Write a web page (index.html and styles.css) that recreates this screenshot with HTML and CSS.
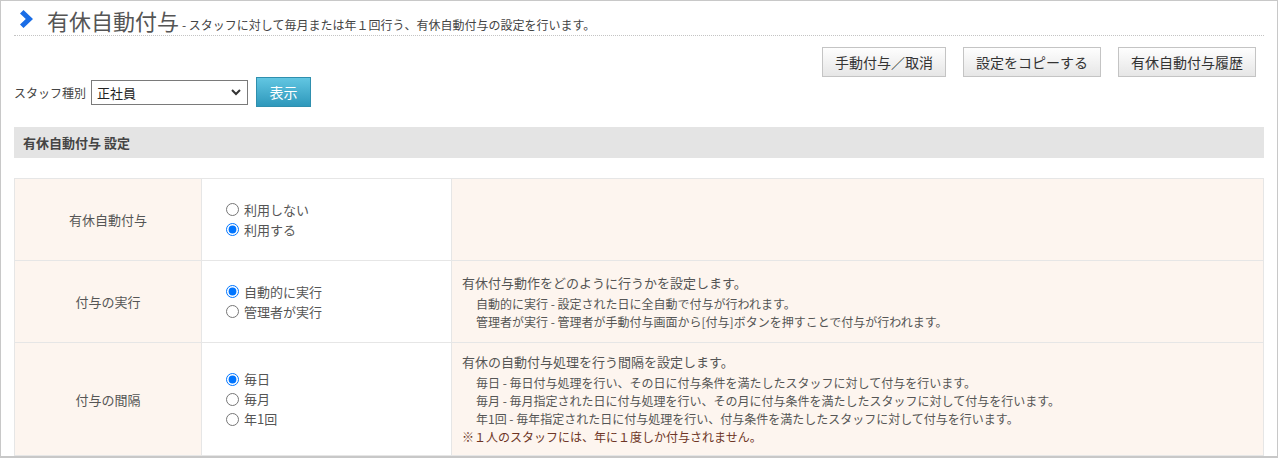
FILE: index.html
```html
<!DOCTYPE html>
<html lang="ja">
<head>
    <meta charset="UTF-8">
    <title>有休自動付与</title>
    <link rel="stylesheet" href="styles.css">
</head>
<body>
    <div class="page">
        <h1 class="page-title">
            <svg class="chevron" width="13" height="18" viewBox="0 0 13 18">
                <polygon points="0,3.5 3.5,0 13,9 3.5,18 0,14.5 5.8,9" fill="#1a6de6"/>
            </svg>
            <span class="title-main">有休自動付与</span>
            <span class="title-sub">- スタッフに対して毎月または年１回行う、有休自動付与の設定を行います。</span>
        </h1>

        <div class="actions">
            <button class="btn">手動付与／取消</button>
            <button class="btn">設定をコピーする</button>
            <button class="btn">有休自動付与履歴</button>
        </div>

        <div class="filter">
            <label class="filter-label">スタッフ種別</label>
            <div class="select">
                <span>正社員</span>
                <svg width="10" height="7" viewBox="0 0 10 7">
                    <polyline points="1,1 5,5 9,1" fill="none" stroke="#333" stroke-width="2"/>
                </svg>
            </div>
            <button class="btn-show">表示</button>
        </div>

        <div class="section-head">有休自動付与 設定</div>

        <table class="settings">
            <tr class="row-short">
                <th>有休自動付与</th>
                <td class="choices">
                    <label><input type="radio" name="use"> 利用しない</label>
                    <label><input type="radio" name="use" checked> 利用する</label>
                </td>
                <td class="desc"></td>
            </tr>
            <tr class="row-short">
                <th>付与の実行</th>
                <td class="choices">
                    <label><input type="radio" name="run" checked> 自動的に実行</label>
                    <label><input type="radio" name="run"> 管理者が実行</label>
                </td>
                <td class="desc">
                    <div class="desc-main">有休付与動作をどのように行うかを設定します。</div>
                    <ul class="desc-list">
                        <li>自動的に実行 - 設定された日に全自動で付与が行われます。</li>
                        <li>管理者が実行 - 管理者が手動付与画面から[付与]ボタンを押すことで付与が行われます。</li>
                    </ul>
                </td>
            </tr>
            <tr class="row-tall">
                <th>付与の間隔</th>
                <td class="choices">
                    <label><input type="radio" name="span" checked> 毎日</label>
                    <label><input type="radio" name="span"> 毎月</label>
                    <label><input type="radio" name="span"> 年1回</label>
                </td>
                <td class="desc">
                    <div class="desc-main">有休の自動付与処理を行う間隔を設定します。</div>
                    <ul class="desc-list">
                        <li>毎日 - 毎日付与処理を行い、その日に付与条件を満たしたスタッフに対して付与を行います。</li>
                        <li>毎月 - 毎月指定された日に付与処理を行い、その月に付与条件を満たしたスタッフに対して付与を行います。</li>
                        <li>年1回 - 毎年指定された日に付与処理を行い、付与条件を満たしたスタッフに対して付与を行います。</li>
                    </ul>
                    <div class="note">※１人のスタッフには、年に１度しか付与されません。</div>
                </td>
            </tr>
        </table>
    </div>
</body>
</html>
```

FILE: styles.css
```css
body {
    margin: 0;
    font-family: "Noto Sans CJK JP", "Noto Sans", sans-serif;
    color: #555;
    background: #fff;
}
.page {
    box-sizing: border-box;
    width: 1278px;
    height: 458px;
    border: 1px solid #c8c8c8;
    border-bottom-width: 2px;
    padding: 0 13px;
    overflow: hidden;
}
.page-title {
    margin: 0;
    padding-top: 4px;
    height: 30px;
    line-height: 30px;
    font-weight: normal;
    border-bottom: 1px dotted #c4c4c4;
    display: flex;
    align-items: baseline;
    white-space: nowrap;
}
.chevron {
    margin: 0 14px 0 6px;
    align-self: center;
    position: relative;
    top: -1px;
}
.title-main {
    font-size: 22px;
    color: #555;
}
.title-sub {
    font-size: 12px;
    color: #444;
    margin-left: 3px;
}
.actions {
    display: flex;
    justify-content: flex-end;
    gap: 17px;
    margin-top: 11px;
    padding-right: 8px;
}
.btn {
    height: 30px;
    padding: 0 12px;
    font-family: inherit;
    font-size: 14px;
    color: #333;
    border: 1px solid #c4c4c4;
    background: linear-gradient(#fefefe, #e6e6e6);
}
.filter {
    display: flex;
    align-items: center;
    height: 30px;
}
.filter-label {
    font-size: 12px;
    color: #444;
    margin-right: 5px;
}
.select {
    box-sizing: border-box;
    width: 157px;
    height: 25px;
    border: 1px solid #7a7a7a;
    display: flex;
    align-items: center;
    justify-content: space-between;
    padding: 0 6px 0 5px;
    font-size: 13px;
    color: #222;
}
.btn-show {
    margin-left: 8px;
    width: 55px;
    height: 30px;
    font-family: inherit;
    font-size: 14px;
    color: #fff;
    border: 1px solid #2f8fae;
    background: linear-gradient(#62c6e2, #2e98bb);
}
.section-head {
    margin-top: 20px;
    height: 31px;
    line-height: 31px;
    padding-left: 9px;
    background: #e4e4e4;
    font-size: 13px;
    font-weight: bold;
    color: #444;
}
.settings {
    margin-top: 20px;
    width: 100%;
    border-collapse: collapse;
    font-size: 13px;
}
.settings th,
.settings td {
    border: 1px solid #e6e6e6;
    vertical-align: middle;
    padding: 0;
}
.settings th {
    width: 186px;
    background: #fdf5ef;
    font-weight: normal;
    color: #555;
}
.row-short th,
.row-short td {
    height: 81px;
}
.row-tall td {
    height: 112px;
}
.choices {
    width: 225px;
    padding-left: 24px !important;
    background: #fff;
}
.choices label {
    display: flex;
    align-items: center;
    line-height: 20px;
    color: #555;
}
.choices input {
    margin: 0 5px 0 0;
    width: 13px;
    height: 13px;
}
.desc {
    background: #fdf5ef;
    padding: 0 10px !important;
}
.desc-main {
    line-height: 20px;
    color: #555;
}
.desc-list {
    list-style: none;
    margin: 2px 0 0;
    padding-left: 14px;
    font-size: 12px;
    line-height: 18px;
    color: #555;
}
.note {
    font-size: 12px;
    line-height: 18px;
    color: #6e3526;
}
```
